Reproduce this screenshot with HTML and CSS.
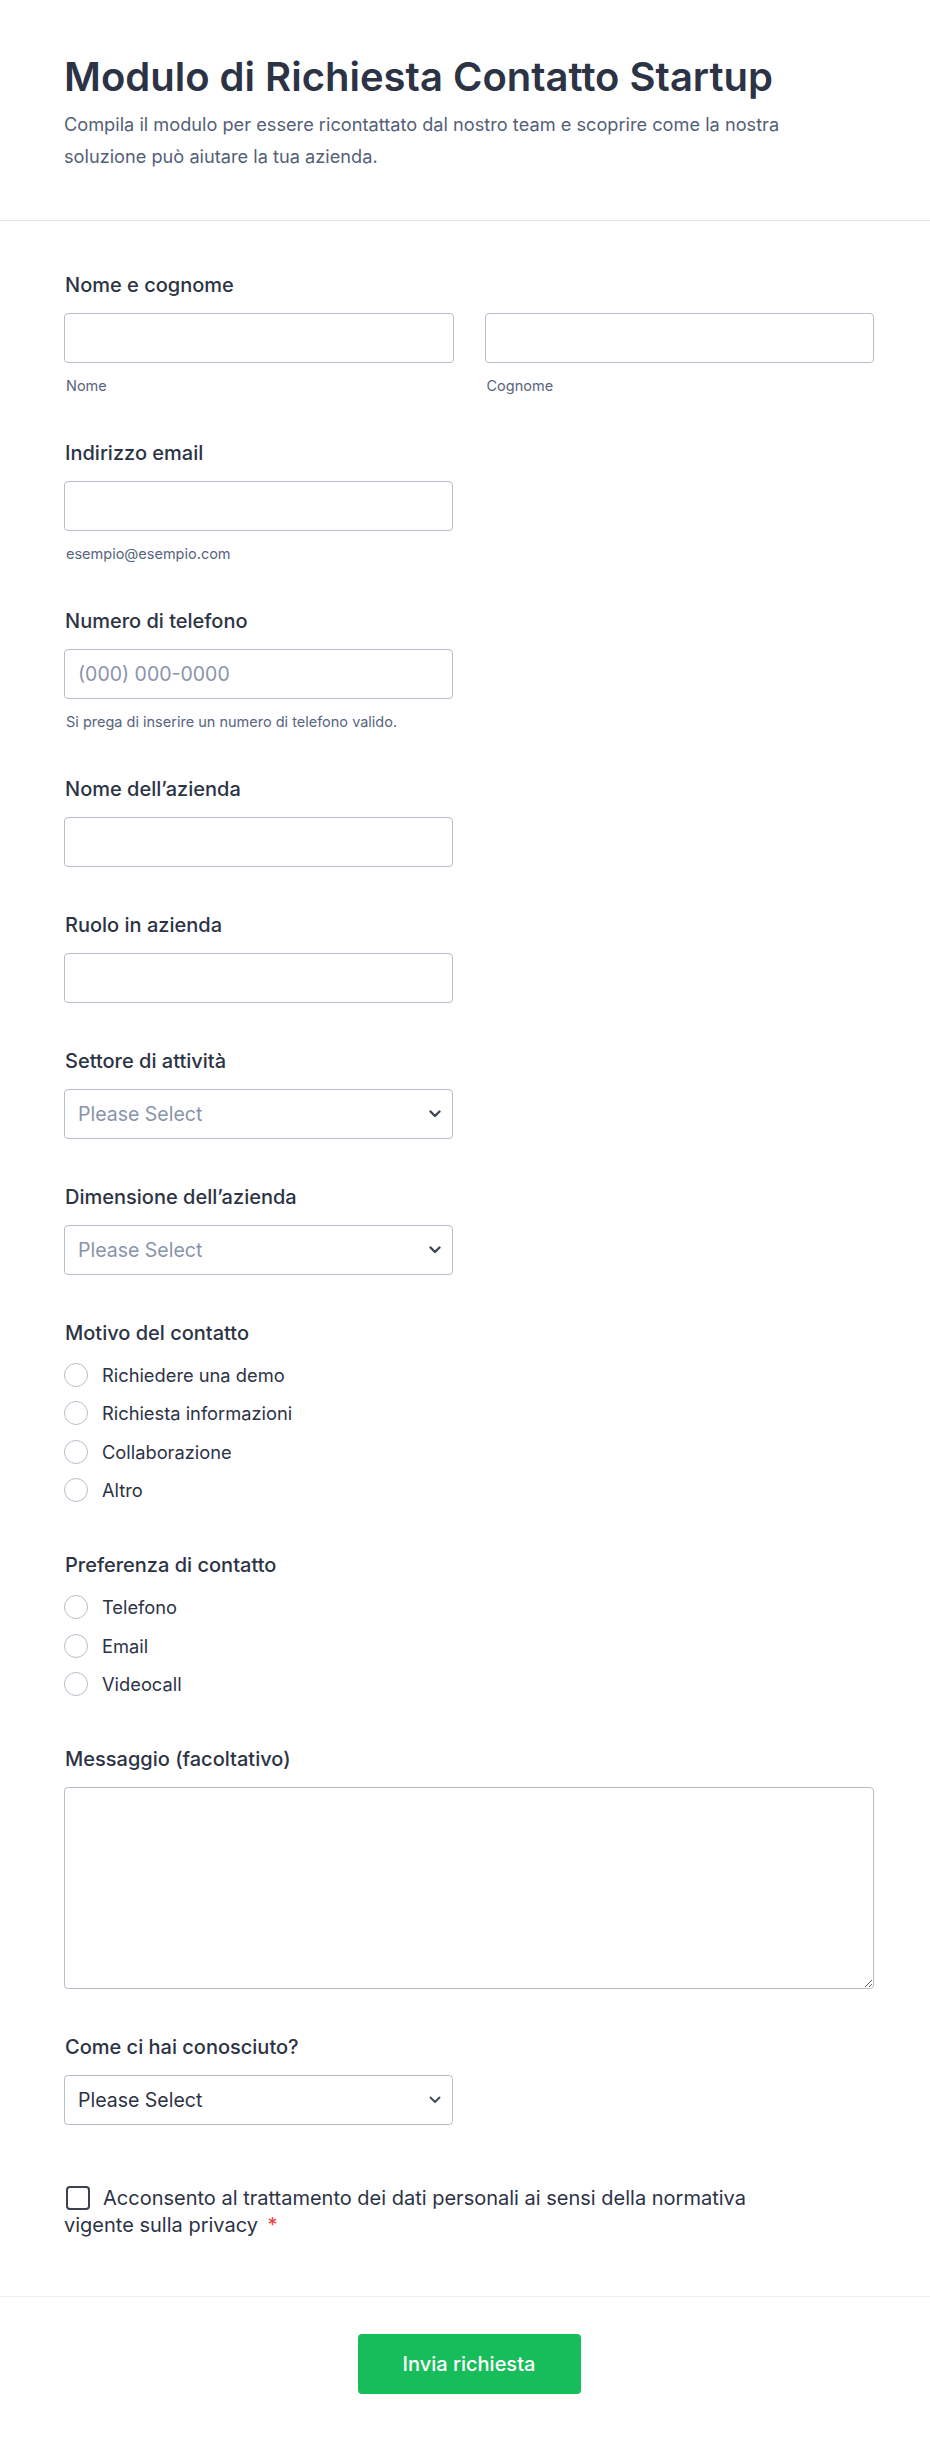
FILE: index.html
```html
<!DOCTYPE html>
<html lang="it">
<head>
  <meta charset="UTF-8">
  <meta name="viewport" content="width=device-width, initial-scale=1">
  <title>Modulo di Richiesta Contatto Startup</title>
  <link rel="stylesheet" href="styles.css">
</head>
<body>
  <header class="form-header">
    <h1>Modulo di Richiesta Contatto Startup</h1>
    <p>Compila il modulo per essere ricontattato dal nostro team e scoprire come la nostra soluzione può aiutare la tua azienda.</p>
  </header>

  <form class="form-body">
    <!-- Nome e cognome -->
    <div class="field">
      <label class="field-label">Nome e cognome</label>
      <div class="name-row">
        <div>
          <input type="text" class="input">
          <span class="sublabel">Nome</span>
        </div>
        <div>
          <input type="text" class="input">
          <span class="sublabel">Cognome</span>
        </div>
      </div>
    </div>

    <div class="field">
      <label class="field-label">Indirizzo email</label>
      <input type="email" class="input half">
      <span class="sublabel">esempio@esempio.com</span>
    </div>

    <div class="field">
      <label class="field-label">Numero di telefono</label>
      <input type="tel" class="input half" placeholder="(000) 000-0000">
      <span class="sublabel">Si prega di inserire un numero di telefono valido.</span>
    </div>

    <div class="field">
      <label class="field-label">Nome dell’azienda</label>
      <input type="text" class="input half">
    </div>

    <div class="field">
      <label class="field-label">Ruolo in azienda</label>
      <input type="text" class="input half">
    </div>

    <div class="field">
      <label class="field-label">Settore di attività</label>
      <div class="select-wrap half">
        <select class="input select empty">
          <option>Please Select</option>
        </select>
        <svg class="chevron" width="12" height="8" viewBox="0 0 12 8"><path d="M1.5 1.5 L6 6 L10.5 1.5" fill="none" stroke="#3e4659" stroke-width="2.4" stroke-linecap="round" stroke-linejoin="round"/></svg>
      </div>
    </div>

    <div class="field">
      <label class="field-label">Dimensione dell’azienda</label>
      <div class="select-wrap half">
        <select class="input select empty">
          <option>Please Select</option>
        </select>
        <svg class="chevron" width="12" height="8" viewBox="0 0 12 8"><path d="M1.5 1.5 L6 6 L10.5 1.5" fill="none" stroke="#3e4659" stroke-width="2.4" stroke-linecap="round" stroke-linejoin="round"/></svg>
      </div>
    </div>

    <div class="field radio-field">
      <span class="field-label">Motivo del contatto</span>
      <div class="options">
        <label class="option"><span class="radio"></span><span>Richiedere una demo</span></label>
        <label class="option"><span class="radio"></span><span>Richiesta informazioni</span></label>
        <label class="option"><span class="radio"></span><span>Collaborazione</span></label>
        <label class="option"><span class="radio"></span><span>Altro</span></label>
      </div>
    </div>

    <div class="field radio-field">
      <span class="field-label">Preferenza di contatto</span>
      <div class="options">
        <label class="option"><span class="radio"></span><span>Telefono</span></label>
        <label class="option"><span class="radio"></span><span>Email</span></label>
        <label class="option"><span class="radio"></span><span>Videocall</span></label>
      </div>
    </div>

    <div class="field">
      <label class="field-label">Messaggio (facoltativo)</label>
      <textarea class="input textarea"></textarea>
    </div>

    <div class="field">
      <label class="field-label">Come ci hai conosciuto?</label>
      <div class="select-wrap half">
        <select class="input select">
          <option>Please Select</option>
        </select>
        <svg class="chevron" width="12" height="8" viewBox="0 0 12 8"><path d="M1.5 1.5 L6 6 L10.5 1.5" fill="none" stroke="#3e4659" stroke-width="1.8" stroke-linecap="round" stroke-linejoin="round"/></svg>
      </div>
    </div>

    <div class="field consent">
      <label class="consent-label"><span class="checkbox"></span>Acconsento al trattamento dei dati personali ai sensi della normativa vigente sulla privacy <span class="required">*</span></label>
    </div>
  </form>

  <div class="form-footer">
    <button type="button" class="submit">Invia richiesta</button>
  </div>
</body>
</html>
```

FILE: styles.css
```css
* {
  box-sizing: border-box;
}

body {
  margin: 0;
  background: #ffffff;
  font-family: Inter, "Noto Sans", sans-serif;
  color: #2c3345;
}

.form-header {
  padding: 53px 56px 48px 64px;
  border-bottom: 1px solid #dfe1ea;
}

.form-header h1 {
  margin: 0;
  font-size: 40px;
  line-height: 48px;
  font-weight: 600;
  color: #2c3345;
}

.form-header p {
  margin: 7px 0 0;
  font-size: 18.2px;
  line-height: 32px;
  color: #545f78;
  max-width: 790px;
}

.form-body {
  padding: 52px 56px 57px 64px;
}

.field {
  margin-bottom: 46px;
}

.field-label {
  display: block;
  padding-left: 1px;
  font-size: 20px;
  line-height: 24px;
  font-weight: 500;
  color: #2c3345;
  margin-bottom: 16px;
}

.name-row {
  display: grid;
  grid-template-columns: 1fr 1fr;
  gap: 31px;
}

.input {
  display: block;
  width: 100%;
  height: 50px;
  padding: 0 13px;
  border: 1px solid #b8bdc9;
  border-radius: 4px;
  background: #ffffff;
  font-family: inherit;
  font-size: 19.5px;
  color: #2c3345;
}

.input::placeholder {
  color: #8894ab;
}

.half {
  width: 389px;
}

.sublabel {
  display: block;
  margin-top: 14px;
  padding-left: 2px;
  font-size: 14.5px;
  line-height: 18px;
  color: #57647e;
}

.select-wrap {
  position: relative;
}

.select {
  appearance: none;
  -webkit-appearance: none;
  padding-right: 40px;
}

.select.empty {
  color: #8894ab;
}

.chevron {
  position: absolute;
  right: 12px;
  top: 21px;
  pointer-events: none;
}

.radio-field {
  margin-bottom: 49px;
}

.options {
  display: flex;
  flex-direction: column;
  gap: 10.4px;
}

.option {
  display: flex;
  align-items: center;
  gap: 14px;
  height: 28px;
  font-size: 18.3px;
  line-height: 24px;
  color: #2c3345;
}

.radio {
  width: 24px;
  height: 24px;
  border: 1px solid #b8bdc9;
  border-radius: 50%;
  flex-shrink: 0;
}

.textarea {
  height: 202px;
  padding: 10px 13px;
  resize: vertical;
}

.consent {
  margin-top: 60px;
  margin-bottom: 0;
}

.consent-label {
  display: block;
  max-width: 720px;
  font-size: 20px;
  line-height: 27px;
  color: #2c3345;
}

.checkbox {
  display: inline-block;
  width: 24px;
  height: 24px;
  margin: 0 13px 0 2px;
  border: 2px solid #3a4152;
  border-radius: 4px;
  vertical-align: -5px;
}

.required {
  margin-left: 4px;
  color: #f23a3c;
}

.form-footer {
  border-top: 1px solid #eef0f5;
  padding: 37px 56px 50px 64px;
  display: flex;
  justify-content: center;
}

.submit {
  width: 223px;
  height: 60px;
  border: none;
  border-radius: 4px;
  background: #18bd5b;
  color: #ffffff;
  font-family: inherit;
  font-size: 20px;
  font-weight: 500;
  cursor: pointer;
}
```
